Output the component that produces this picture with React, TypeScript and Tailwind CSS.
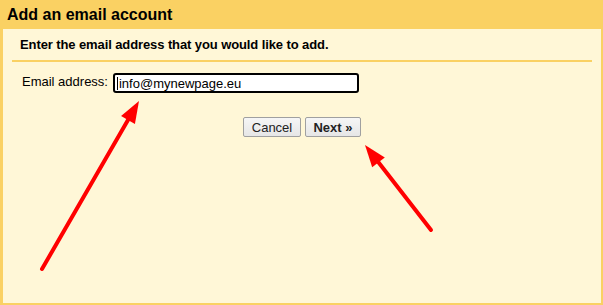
import React from "react";

function Arrow({ x1, y1, x2, y2 }: { x1: number; y1: number; x2: number; y2: number }) {
  // line with a filled triangular head at (x2, y2)
  const dx = x2 - x1;
  const dy = y2 - y1;
  const len = Math.sqrt(dx * dx + dy * dy);
  const ux = dx / len;
  const uy = dy / len;
  const headLen = 22;
  const headHalf = 8;
  const bx = x2 - ux * headLen;
  const by = y2 - uy * headLen;
  const px = -uy;
  const py = ux;
  const pts = `${x2},${y2} ${bx + px * headHalf},${by + py * headHalf} ${bx - px * headHalf},${by - py * headHalf}`;
  return (
    <g>
      <line x1={x1} y1={y1} x2={bx + ux * 2} y2={by + uy * 2} stroke="#ff0000" strokeWidth={4} strokeLinecap="round" />
      <polygon points={pts} fill="#ff0000" />
    </g>
  );
}

export default function App() {
  return (
    <div
      className="relative w-[603px] h-[305px] bg-[#fad163] flex flex-col overflow-hidden"
      style={{ fontFamily: "Arial, 'Liberation Sans', sans-serif" }}
    >
      <div className="h-[29px] shrink-0 flex items-center pl-[7px] pt-px">
        <h1 className="text-[16px] font-bold text-black leading-none">Add an email account</h1>
      </div>

      <div className="flex-1 ml-[3px] mr-[2px] mb-[2px] bg-[#fff7d7] flex flex-col">
        <p className="pl-[17px] pt-[8px] text-[13px] font-bold text-black leading-[15px] tracking-[-0.1px]">
          Enter the email address that you would like to add.
        </p>
        <div className="mx-[9px] mt-[8px] h-[2px] bg-[#fad163]" />

        <div className="flex items-center mt-[11px] pl-[19px]">
          <label className="text-[13px] text-black leading-none pr-[5px] pb-[4px]">Email address:</label>
          <div className="w-[246px] h-[20px] border-2 border-black rounded-[3px] bg-white flex items-center pl-[2px]">
            <span className="w-px h-[13px] bg-black mr-px" />
            <span className="text-[13px] text-black leading-none">info@mynewpage.eu</span>
          </div>
        </div>

        <div className="flex justify-center gap-[4px] mt-[24px]">
          <button className="w-[58px] h-[20px] border border-[#a0a0a0] rounded-[2px] bg-gradient-to-b from-[#f6f6f6] to-[#e6e6e6] text-[13px] text-[#222] leading-none">
            Cancel
          </button>
          <button className="w-[56px] h-[20px] border border-[#a0a0a0] rounded-[2px] bg-gradient-to-b from-[#f6f6f6] to-[#e6e6e6] text-[13px] font-bold text-[#222] leading-none">
            Next »
          </button>
        </div>
      </div>

      <svg className="absolute inset-0 pointer-events-none" width={603} height={305}>
        <Arrow x1={42} y1={269} x2={139} y2={101} />
        <Arrow x1={431} y1={230} x2={365} y2={145} />
      </svg>
    </div>
  );
}
